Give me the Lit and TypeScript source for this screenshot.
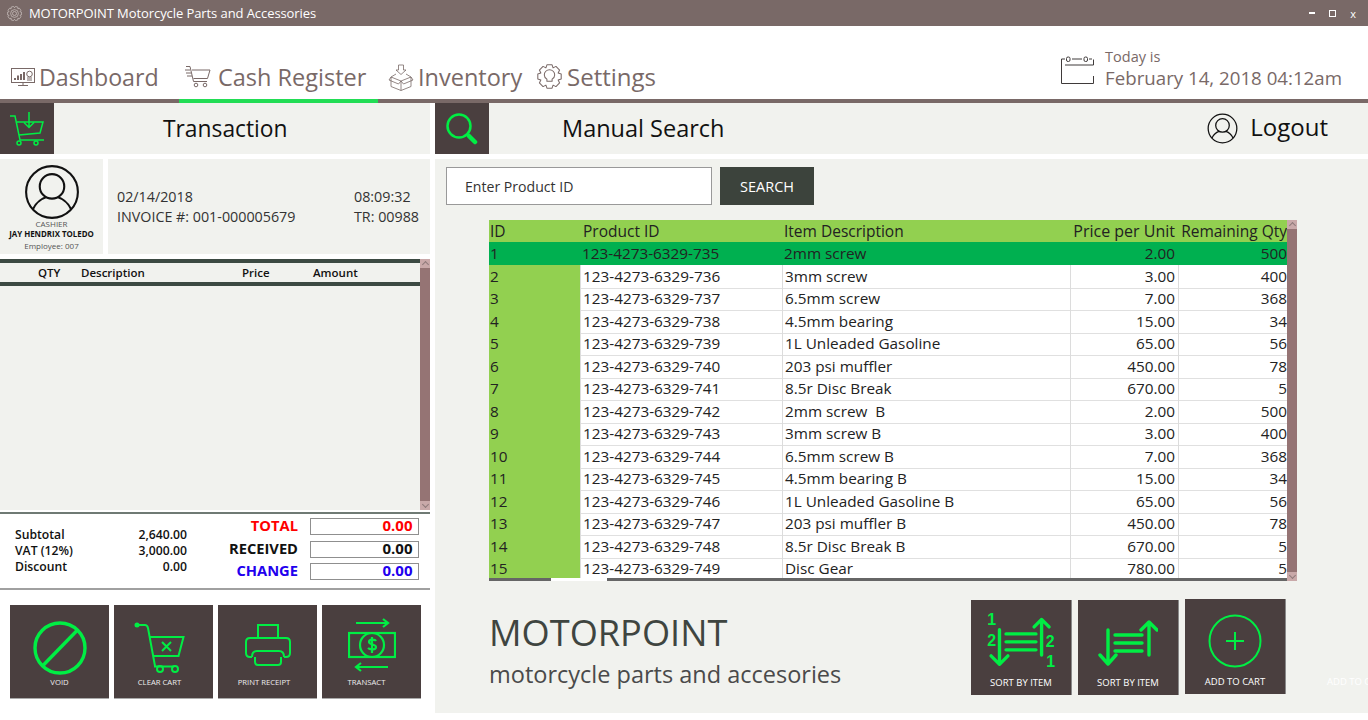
import { LitElement, html, css, svg } from 'lit';
import { customElement } from 'lit/decorators.js';

const rows = [
  ['1', '123-4273-6329-735', '2mm screw', '2.00', '500'],
  ['2', '123-4273-6329-736', '3mm screw', '3.00', '400'],
  ['3', '123-4273-6329-737', '6.5mm screw', '7.00', '368'],
  ['4', '123-4273-6329-738', '4.5mm bearing', '15.00', '34'],
  ['5', '123-4273-6329-739', '1L Unleaded Gasoline', '65.00', '56'],
  ['6', '123-4273-6329-740', '203 psi muffler', '450.00', '78'],
  ['7', '123-4273-6329-741', '8.5r Disc Break', '670.00', '5'],
  ['8', '123-4273-6329-742', '2mm screw  B', '2.00', '500'],
  ['9', '123-4273-6329-743', '3mm screw B', '3.00', '400'],
  ['10', '123-4273-6329-744', '6.5mm screw B', '7.00', '368'],
  ['11', '123-4273-6329-745', '4.5mm bearing B', '15.00', '34'],
  ['12', '123-4273-6329-746', '1L Unleaded Gasoline B', '65.00', '56'],
  ['13', '123-4273-6329-747', '203 psi muffler B', '450.00', '78'],
  ['14', '123-4273-6329-748', '8.5r Disc Break B', '670.00', '5'],
  ['15', '123-4273-6329-749', 'Disc Gear', '780.00', '5'],
];

// gear outline around 12,12
function gearPath(outer: number, inner: number, teeth: number) {
  const pts: string[] = [];
  for (let i = 0; i < teeth; i++) {
    const a = (i / teeth) * Math.PI * 2;
    const w = Math.PI / teeth;
    const p = (r: number, t: number) => `${(12 + r * Math.cos(t)).toFixed(2)} ${(12 + r * Math.sin(t)).toFixed(2)}`;
    pts.push(p(inner, a - w), p(outer, a - w * 0.55), p(outer, a + w * 0.55), p(inner, a + w));
  }
  return 'M' + pts.join('L') + 'Z';
}

const tabColor = '#796967';
const green = '#00ee44';

const titleGear = html`<svg width="15" height="15" viewBox="0 0 24 24" fill="none" stroke="#d8d0ce" stroke-width="1">
  <path d=${gearPath(11.5, 9.2, 10)} />
  <circle cx="12" cy="12" r="6.2" />
  <circle cx="12" cy="12" r="3.2" />
</svg>`;

const settingsIcon = html`<svg width="25" height="25" viewBox="0 0 24 24" fill="none" stroke=${tabColor} stroke-width="1" stroke-linejoin="round">
  <path d=${gearPath(11.5, 9, 8)} />
  <path d="M9.500 16.500v-2c-1.500-1-2.500-2.200-2.500-4a5 5 0 0 1 10 0c0 1.800-1 3-2.500 4v2z" />
</svg>`;

const dashIcon = html`<svg width="25" height="22" viewBox="0 0 25 22" fill="none" stroke=${tabColor}>
  <rect x="0.5" y="2.5" width="23" height="14" />
  <path d="M7 19.5h10M12 17v2" />
  <path d="M4 14v-2M7 14V9.5M10 14V8M13 14V6" stroke-width="2" />
  <circle cx="18.5" cy="8" r="2.8" />
  <path d="M16 12h5M16 14h5" />
</svg>`;

const cartIcon = html`<svg width="26" height="24" viewBox="0 0 26 24" fill="none" stroke=${tabColor}>
  <path d="M1 1.5h4l3.5 15h13.5M7 5h18l-2.5 8.5H8.5" />
  <path d="M0 5h5M1 8h5M2 11h5" />
  <circle cx="11" cy="20" r="1.8" />
  <circle cx="20" cy="20" r="1.8" />
</svg>`;

const boxIcon = html`<svg width="26" height="27" viewBox="0 0 26 27" fill="none" stroke=${tabColor} stroke-width="0.8">
  <path d="M10.500 1h5v5h2.500L13 10.500 8 6h2.500z" />
  <path d="M3 13v9.500l10 4 10-4V13M13 17v9.500" />
  <path d="M3 13l10 4 10-4M3 13l5-3M23 13l-5-3M3 13l-2 3 9.500 4L13 17l2.500 3L25 16l-2-3" />
</svg>`;

const calendarIcon = html`<svg class="cal" width="34" height="30" viewBox="0 0 34 30" fill="none" stroke="#3f3a3a" stroke-width="1">
  <path d="M5 3H1.5v24.5h32V20M33.500 3.500V9H5" />
  <path d="M12 3h10M29 3h3" />
  <rect x="6.500" y="1" width="3.500" height="4.500" rx="1.500" />
  <rect x="24" y="1" width="3.500" height="4.500" rx="1.500" />
</svg>`;

const userIcon = (size: number, sw: number) => html`<svg width=${size} height=${size} viewBox="0 0 32 32" fill="none" stroke="#111" stroke-width=${sw}>
  <circle cx="16" cy="16" r="14.8" />
  <ellipse cx="16" cy="12.800" rx="7" ry="7" />
  <path d="M5 26C7 21.500 11 19.500 12.500 19M27 26C25 21.500 21 19.500 19.500 19" />
</svg>`;

const basketIcon = html`<svg width="36" height="36" viewBox="0 0 36 36" fill="none" stroke=${green} stroke-width="1.500">
  <path d="M1 5h5l5 24h24M8 11h26l-3 11-21 2" />
  <path d="M20 1v15M15 11.500l5 5 5-5" />
  <circle cx="10" cy="32" r="2" />
  <circle cx="27" cy="32" r="2" />
</svg>`;

const searchIcon = html`<svg width="32" height="32" viewBox="0 0 32 32" fill="none" stroke=${green}>
  <circle cx="13" cy="13" r="11.500" stroke-width="2.500" />
  <path d="M23 23l6 6" stroke-width="4.500" stroke-linecap="round" />
</svg>`;

const voidIcon = html`<svg width="54" height="54" viewBox="0 0 54 54" fill="none" stroke=${green} stroke-width="3.400">
  <circle cx="27" cy="27" r="25" />
  <path d="M9.500 45L44.500 9" />
</svg>`;

const clearIcon = html`<svg class="clear" width="52" height="52" viewBox="0 0 52 52" fill="none" stroke=${green} stroke-width="2">
  <circle cx="3" cy="3" r="1.500" fill=${green} />
  <path d="M3 3h8c2 0 2.500 1 3 3l7 38" />
  <path d="M15.500 15h34l-5 19H19" />
  <path d="M28 20l9 9M37 20l-9 9" />
  <path d="M20 44.500h20" />
  <circle cx="26" cy="47" r="3" />
  <circle cx="41" cy="47" r="3" />
</svg>`;

const printIcon = html`<svg class="up" width="48" height="44" viewBox="0 0 48 44" fill="none" stroke=${green} stroke-width="2">
  <path d="M14 15V2h20v13" />
  <path d="M8 34H6c-3 0-4-2-4-4V19c0-3 2-4 4-4h36c3 0 4 1 4 4v11c0 3-2 4-4 4h-2" />
  <path d="M8 34c0-5 3-6 5-6h22c3 0 5 2 5 6M11 34v5c0 2 1 3 3 3h20c2 0 3-1 3-3v-5" />
</svg>`;

const transactIcon = html`<svg class="up" width="48" height="54" viewBox="0 0 48 54" fill="none" stroke=${green} stroke-width="2.200">
  <path d="M8 5h32M35 1l5 4-5 4" />
  <rect x="1" y="15" width="46" height="24" />
  <circle cx="24" cy="27" r="12" />
  <path d="M28 23c-1-2-7-2-7 1s7 2 7 5-6 3-8 1M24 19v16" />
  <path d="M40 49H8M13 45l-5 4 5 4" />
</svg>`;

const digit = (x: number, y: number, d: string) => svg`<text x=${x} y=${y} fill=${green} stroke="none" font-family="Liberation Sans, sans-serif" font-size="17" font-weight="700">${d}</text>`;

const sortBothIcon = html`<svg width="68" height="58" viewBox="0 0 72 62" fill="none" stroke=${green} stroke-width="3.600" stroke-linecap="round" stroke-linejoin="round">
  <path d="M13 20v37M4 48l9 9 9-9" />
  <path d="M20 24.500h32M20 33h32M20 41.500h32" />
  <path d="M58 9v38M50 17l8-8 8 8" />
  ${digit(0, 15, '1')}${digit(0, 37, '2')}${digit(62.500, 39, '2')}${digit(63, 60, '1')}
</svg>`;

const sortIcon = html`<svg class="low" width="60" height="46" viewBox="0 0 60 46" fill="none" stroke=${green} stroke-width="3.400" stroke-linecap="round" stroke-linejoin="round">
  <path d="M10 10v34M2 35l8 9 8-9" />
  <path d="M17 15h27M17 23h27M17 31h27" />
  <path d="M51 2v33M43 10l8-8 8 8" />
</svg>`;

const addIcon = html`<svg width="54" height="54" viewBox="0 0 54 54" fill="none" stroke=${green}>
  <circle cx="27" cy="27" r="25.500" stroke-width="2" />
  <path d="M27 18v18M18 27h18" stroke-width="2" />
</svg>`;

@customElement('app-root')
export class AppRoot extends LitElement {
  static styles = css`
    :host {
      display: flex;
      flex-direction: column;
      width: 1368px;
      height: 720px;
      overflow: hidden;
      background: #fff;
      font-family: 'Open Sans', 'Noto Sans', sans-serif;
      color: #111;
    }
    .titlebar {
      height: 26px;
      flex: none;
      background: #796967;
      color: #fff;
      display: flex;
      align-items: center;
      padding: 0 12px 0 7px;
      font-size: 13px;
      letter-spacing: -0.08px;
    }
    .titlebar svg { margin-right: 7px; }
    .win { margin-left: auto; display: flex; align-items: center; gap: 14px; font-size: 11px; }
    .win .min { width: 6px; height: 2px; background: #fff; }
    .win .max { width: 5px; height: 5px; border: 1px solid #fff; }
    .header {
      height: 73px;
      flex: none;
      display: flex;
      align-items: flex-end;
      border-bottom: 4px solid #796967;
      color: #796967;
    }
    .tab {
      display: flex;
      align-items: center;
      font-size: 23.500px;
      height: 48px;
      margin-bottom: -4px;
      padding-bottom: 4px;
      box-sizing: border-box;
    }
    .tab svg { flex: none; }
    .tab.dash { padding-left: 11px; gap: 3px; width: 179px; font-size: 23.200px; }
    .tab.cash { width: 199px; padding-left: 6px; padding-bottom: 0; gap: 7px; border-bottom: 4px solid #22dd55; }
    .tab.inv { padding-left: 10px; gap: 4px; width: 159px; }
    .tab.set { gap: 5px; font-size: 24px; padding-bottom: 6px; }
    .today { margin-left: auto; display: flex; align-items: center; gap: 11px; padding: 0 26px 9px 0; }
    .today .cal { margin-top: 3px; }
    .today .small { font-size: 14.500px; line-height: 18px; }
    .today .big { font-size: 18.700px; line-height: 24px; }
    .main { flex: 1; display: grid; grid-template-columns: 430px 933px; gap: 5px; min-height: 0; }
    .col { display: flex; flex-direction: column; min-height: 0; }
    .bar {
      height: 51px;
      flex: none;
      background: #f1f2ee;
      display: flex;
      align-items: center;
      font-size: 24px;
    }
    .bar span { padding-bottom: 2px; }
    .bar .sq {
      width: 54px;
      height: 51px;
      flex: none;
      background: #4a3f3f;
      display: flex;
      align-items: center;
      justify-content: center;
    }
    .bar .t1 { margin-left: 109px; font-size: 22.800px; padding-bottom: 1px; }
    .bar .t2 { margin-left: 73px; font-size: 23.500px; }
    .logout { margin-left: auto; display: flex; align-items: center; gap: 12px; padding-right: 40px; }
    .logout span { padding-bottom: 4px; }
    .info { margin-top: 5px; display: grid; grid-template-columns: 103px 1fr; gap: 5px; height: 95px; flex: none; }
    .cashier {
      background: #f1f2ee;
      display: flex;
      flex-direction: column;
      align-items: center;
      padding-top: 5px;
      font-size: 8px;
      line-height: 11px;
      box-sizing: border-box;
      color: #555;
    }
    .cashier svg { display: block; margin-bottom: -2px; }
    .cashier b { color: #111; font-size: 7.900px; }
    .inv-card {
      background: #f1f2ee;
      display: grid;
      grid-template-columns: 1fr 76px;
      align-content: center;
      padding: 0 0 0 9px;
      font-size: 14.300px;
      line-height: 20px;
      color: #333;
    }
    .list { margin-top: 5px; height: 251px; flex: none; display: flex; }
    .list .inner { flex: 1; background: #f1f2ee; display: flex; flex-direction: column; }
    .lhead {
      height: 27px;
      box-sizing: border-box;
      border-top: 4px solid #3c4a42;
      border-bottom: 4px solid #3c4a42;
      display: grid;
      grid-template-columns: 38px 43px 161px 71px 1fr;
      align-items: center;
      font-size: 11.500px;
      font-weight: 600;
    }
    .vscroll { width: 10px; flex: none; background: #957474; display: flex; flex-direction: column; justify-content: space-between; }
    .vscroll i { display: flex; align-items: center; justify-content: center; height: 9px; background: #c9a9a9; }
    .vscroll i::after {
      content: '';
      width: 4px;
      height: 4px;
      border-left: 1px solid #8f7a7a;
      border-top: 1px solid #8f7a7a;
      transform: translateY(1px) rotate(45deg);
    }
    .vscroll i:last-child::after { transform: translateY(-1px) rotate(225deg); }
    .summary {
      margin-top: 2px;
      height: 78px;
      flex: none;
      box-sizing: border-box;
      border-top: 2px solid #6f7a74;
      border-bottom: 2px solid #a0a0a0;
      display: grid;
      grid-template-columns: 215px 1fr;
    }
    .sub {
      display: grid;
      grid-template-columns: 1fr auto;
      align-content: center;
      padding: 0 28px 0 15px;
      font-size: 12.200px;
      font-weight: 600;
      line-height: 16px;
    }
    .sub .val { text-align: right; }
    .tot {
      display: grid;
      grid-template-columns: 83px 108.500px;
      column-gap: 12px;
      align-content: start;
      row-gap: 5.500px;
      padding-top: 4px;
    }
    .tot span { font-size: 14.700px; font-weight: 700; text-align: right; line-height: 14px; }
    .tot div {
      height: 17px;
      box-sizing: border-box;
      border: 1px solid #8f8f8f;
      text-align: right;
      padding-right: 5px;
      font-size: 15px;
      font-weight: 700;
      line-height: 13px;
    }
    .red { color: #f00; }
    .blue { color: #2200ee; }
    .actions { margin-top: 15px; padding-left: 10px; display: grid; grid-template-columns: repeat(4, 99px); gap: 5px; }
    .act {
      height: 93px;
      background: #4a3f3f;
      display: grid;
      grid-template-rows: 54px 14px;
      justify-items: center;
      align-items: center;
      align-content: start;
      color: #eee;
      font-size: 7.700px;
      padding-top: 16px;
      box-sizing: border-box;
      box-shadow: 0 1px 0 #aaa;
    }
    .act svg.clear { margin-right: 8px; }
    .act svg.up { margin-top: -6px; }
    .act span.clear { margin-right: 8px; }
    .act span.print { margin-right: 7px; }
    .act span.trans { margin-right: 10px; }
    .body {
      margin-top: 5px;
      flex: 1;
      background: #f1f2ee;
      display: flex;
      flex-direction: column;
      padding: 8px 0 0 11px;
      margin-bottom: 7px;
      min-height: 0;
    }
    .search { display: flex; gap: 8px; height: 38px; flex: none; }
    .search .in {
      width: 266px;
      box-sizing: border-box;
      border: 1px solid #999;
      background: #fff;
      padding: 1px 0 0 18px;
      font-size: 14.100px;
      display: flex;
      align-items: center;
      color: #333;
    }
    .search .btn {
      width: 94px;
      background: #3c433c;
      color: #fff;
      font-size: 14.500px;
      display: flex;
      align-items: center;
      justify-content: center;
    }
    .tablewrap { margin: 15px 0 0 43px; display: flex; width: 808px; height: 361px; flex: none; }
    .table { width: 798px; display: flex; flex-direction: column; overflow: hidden; background: #fff; }
    .rows { height: 358px; overflow: hidden; flex: none; font-size: 15.300px; color: #222; }
    .row { display: grid; grid-template-columns: 91px 202px 288px 108px 109px; height: 22.500px; line-height: 23px; }
    .row span {
      padding-left: 2px;
      white-space: pre;
      box-sizing: border-box;
      border-left: 1px solid #dcdcdc;
      border-bottom: 1px solid #e0e0e0;
    }
    .row span:first-child { background: #92d050; border: none; padding-left: 1px; }
    .row span.num { text-align: right; padding: 0 3px 0 0; }
    .row span.num:last-child { padding-right: 0; }
    .row.head { background: #92d050; height: 22px; font-size: 15.500px; line-height: 22px; }
    .row.head span, .row.sel span { border: none; }
    .row.head span:nth-child(2) { padding-left: 3px; }
    .row.head span:nth-child(4) { font-size: 16px; }
    .row.sel { background: #00b050; }
    .row.sel span:first-child { background: #00b050; }
    .hscroll { height: 3px; flex: none; display: grid; grid-template-columns: 62px 56px 1fr; background: #666; }
    .hscroll i { background: #fff; grid-column: 2; }
    .bottom { flex: 1; display: flex; align-items: flex-start; margin-left: 43px; padding-top: 19px; }
    .brand { width: 482px; flex: none; color: #3f4540; padding-top: 11px; }
    .brand h1 { margin: 0; font-weight: 400; font-size: 36.200px; line-height: 42px; }
    .brand p { margin: 0; font-size: 23.500px; line-height: 42px; color: #4a4a4a; }
    .tools { display: flex; gap: 7px; flex: none; }
    .tool {
      width: 100px;
      height: 95px;
      background: #4a3f3f;
      display: grid;
      grid-template-rows: 66px 18px;
      justify-items: center;
      align-items: center;
      align-content: start;
      color: #fff;
      font-size: 9.500px;
      box-sizing: border-box;
      padding-top: 7px;
      box-shadow: 1px 0 0 #8a8a8a;
    }
    .tool .low { margin-top: 6px; }
    .tool.add { margin-top: -1px; }
    .tool.add svg { margin-top: 4px; }
    .ghost { color: #fff; font-size: 9.500px; white-space: nowrap; flex: none; margin: 75px 0 0 42px; }
  `;

  render() {
    return html`
      <div class="titlebar">
        ${titleGear}
        <span>MOTORPOINT Motorcycle Parts and Accessories</span>
        <div class="win"><i class="min"></i><i class="max"></i><span>x</span></div>
      </div>
      <div class="header">
        <div class="tab dash">${dashIcon}<span>Dashboard</span></div>
        <div class="tab cash">${cartIcon}<span>Cash Register</span></div>
        <div class="tab inv">${boxIcon}<span>Inventory</span></div>
        <div class="tab set">${settingsIcon}<span>Settings</span></div>
        <div class="today">
          ${calendarIcon}
          <div>
            <div class="small">Today is</div>
            <div class="big">February 14, 2018 04:12am</div>
          </div>
        </div>
      </div>
      <div class="main">
        <div class="col">
          <div class="bar"><div class="sq">${basketIcon}</div><span class="t1">Transaction</span></div>
          <div class="info">
            <div class="cashier">
              ${userIcon(56, 1.200)}
              <span>CASHIER</span><b>JAY HENDRIX TOLEDO</b><span>Employee: 007</span>
            </div>
            <div class="inv-card">
              <span>02/14/2018</span><span>08:09:32</span>
              <span>INVOICE #: 001-000005679</span><span>TR: 00988</span>
            </div>
          </div>
          <div class="list">
            <div class="inner">
              <div class="lhead"><span></span><span>QTY</span><span>Description</span><span>Price</span><span>Amount</span></div>
            </div>
            <div class="vscroll"><i></i><i></i></div>
          </div>
          <div class="summary">
            <div class="sub">
              <span>Subtotal</span><span class="val">2,640.00</span>
              <span>VAT (12%)</span><span class="val">3,000.00</span>
              <span>Discount</span><span class="val">0.00</span>
            </div>
            <div class="tot">
              <span class="red">TOTAL</span><div class="red">0.00</div>
              <span>RECEIVED</span><div>0.00</div>
              <span class="blue">CHANGE</span><div class="blue">0.00</div>
            </div>
          </div>
          <div class="actions">
            <div class="act">${voidIcon}<span>VOID</span></div>
            <div class="act">${clearIcon}<span class="clear">CLEAR CART</span></div>
            <div class="act">${printIcon}<span class="print">PRINT RECEIPT</span></div>
            <div class="act">${transactIcon}<span class="trans">TRANSACT</span></div>
          </div>
        </div>
        <div class="col">
          <div class="bar">
            <div class="sq">${searchIcon}</div>
            <span class="t2">Manual Search</span>
            <div class="logout">${userIcon(31, 1.300)}<span>Logout</span></div>
          </div>
          <div class="body">
            <div class="search"><div class="in">Enter Product ID</div><div class="btn">SEARCH</div></div>
            <div class="tablewrap">
              <div class="table">
                <div class="rows">
                  <div class="row head"><span>ID</span><span>Product ID</span><span>Item Description</span><span class="num">Price per Unit</span><span class="num">Remaining Qty</span></div>
                  ${rows.map((r, i) => html`
                    <div class="row ${i === 0 ? 'sel' : ''}">
                      <span>${r[0]}</span><span>${r[1]}</span><span>${r[2]}</span><span class="num">${r[3]}</span><span class="num">${r[4]}</span>
                    </div>`)}
                </div>
                <div class="hscroll"><b></b><i></i></div>
              </div>
              <div class="vscroll"><i></i><i></i></div>
            </div>
            <div class="bottom">
              <div class="brand"><h1>MOTORPOINT</h1><p>motorcycle parts and accesories</p></div>
              <div class="tools">
                <div class="tool">${sortBothIcon}<span>SORT BY ITEM</span></div>
                <div class="tool">${sortIcon}<span>SORT BY ITEM</span></div>
                <div class="tool add">${addIcon}<span>ADD TO CART</span></div>
              </div>
              <div class="ghost">ADD TO CART</div>
            </div>
          </div>
        </div>
      </div>
    `;
  }
}
